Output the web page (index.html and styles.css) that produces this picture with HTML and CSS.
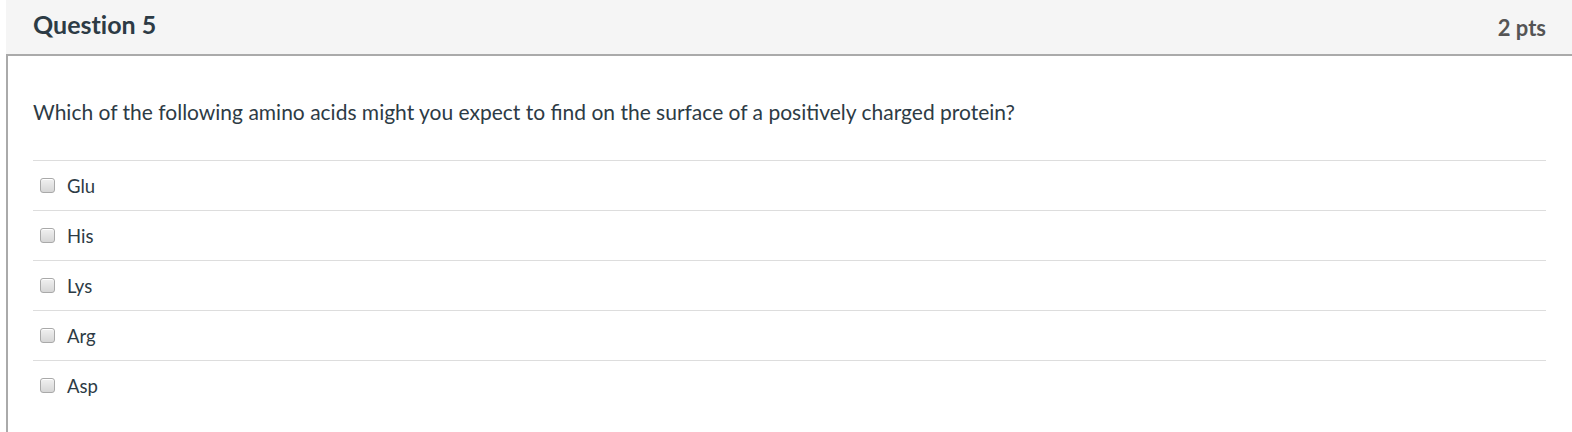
FILE: index.html
```html
<!DOCTYPE html>
<html>
<head>
<meta charset="utf-8">
<link rel="stylesheet" href="styles.css">
</head>
<body>
<div class="question">
  <div class="header">
    <h2 class="title">Question 5</h2>
    <span class="points">2 pts</span>
  </div>
  <div class="content">
    <p class="text">Which of the following amino acids might you expect to find on the surface of a positively charged protein?</p>
    <div class="answers">
      <label class="answer"><span class="box"></span><span class="label">Glu</span></label>
      <label class="answer"><span class="box"></span><span class="label">His</span></label>
      <label class="answer"><span class="box"></span><span class="label">Lys</span></label>
      <label class="answer"><span class="box"></span><span class="label">Arg</span></label>
      <label class="answer"><span class="box"></span><span class="label">Asp</span></label>
    </div>
  </div>
</div>
</body>
</html>
```
FILE: styles.css
```css
html, body {
  margin: 0;
  padding: 0;
  background: #fff;
  height: 432px;
  overflow: hidden;
}
body {
  font-family: Lato, "Liberation Sans", sans-serif;
  color: #2d3b45;
  padding-left: 6px;
  box-sizing: border-box;
  font-variant-ligatures: no-common-ligatures;
}
.question {
  display: flex;
  flex-direction: column;
}
.header {
  background: #f5f5f5;
  height: 54px;
  border-bottom: 2px solid #aaa;
  display: flex;
  align-items: center;
  justify-content: space-between;
  padding: 0 26px 0 27px;
}
.title {
  margin: 0;
  font-size: 25px;
  font-weight: 700;
  color: #2d3b45;
  position: relative;
  top: -3px;
}
.points {
  font-size: 22px;
  font-weight: 700;
  color: #555;
}
.content {
  border-left: 2px solid #aaa;
  padding: 0 26px 0 25px;
  height: 376px;
}
.text {
  margin: 0;
  padding-top: 43px;
  font-size: 21px;
  line-height: 26px;
  height: 61px;
  font-variant-ligatures: common-ligatures;
}
.answers {
  display: flex;
  flex-direction: column;
}
.answer {
  display: flex;
  align-items: center;
  height: 49px;
  border-top: 1px solid #ddd;
}
.box {
  width: 13px;
  height: 13px;
  margin-left: 7px;
  border: 1px solid #a9a9a9;
  border-radius: 3px;
  background: linear-gradient(#f0f0f0, #d6d6d6);
  box-shadow: inset 0 1px 0 #fff;
}
.label {
  margin-left: 12px;
  font-size: 18.5px;
}
```
